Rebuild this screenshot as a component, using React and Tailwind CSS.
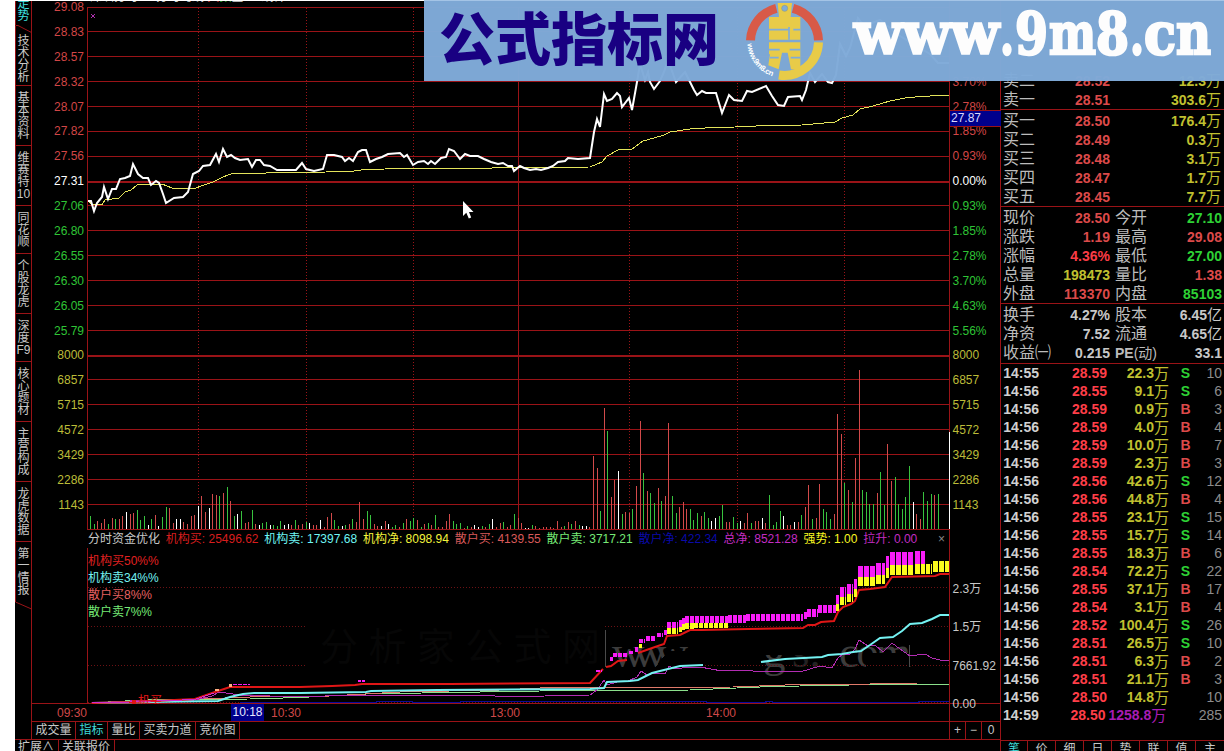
import React from 'react';

const GRID = '#9a1317';

const sideTabs = [
    { label: '技术分析', size: 'h-[60px]' },
    { label: '基本资料', size: 'h-[60px]' },
    { label: '维赛特10', size: 'h-[60px]' },
    { label: '同花顺', size: 'h-[48px]' },
    { label: '个股龙虎', size: 'h-[60px]' },
    { label: '深度F9', size: 'h-[48px]' },
    { label: '核心题材', size: 'h-[60px]' },
    { label: '主营构成', size: 'h-[60px]' },
    { label: '龙虎数据', size: 'h-[60px]' },
    { label: '第一情报', size: 'h-[60px]' }
];

// the first three rows of the percent scale stay empty under the banner
const axis = [
    ['29.08', ''], ['28.83', ''], ['28.57', ''], ['28.32', '3.70%'],
    ['28.07', '2.78%'], ['27.82', '1.85%'], ['27.56', '0.93%'], ['27.31', '0.00%'],
    ['27.06', '0.93%'], ['26.80', '1.85%'], ['26.55', '2.78%'], ['26.30', '3.70%'],
    ['26.05', '4.63%'], ['25.79', '5.56%'], ['8000', '8000'], ['6857', '6857'],
    ['5715', '5715'], ['4572', '4572'], ['3429', '3429'], ['2286', '2286'], ['1143', '1143']
];

const axisColor = (i) => {
    if (i < 7) return 'text-[#d24646]';
    if (i === 7) return 'text-white';
    if (i < 14) return 'text-[#2fc436]';
    return 'text-[#bcbc38]';
};

const gridRows = [7.5, 31.5, 56.5, 81.5, 106.5, 131.5, 156.5, 205.5, 230.5, 255.5, 280.5, 305.5, 330.5, 379.5, 404.5, 429.5, 454.5, 479.5, 504.5, 529.5];
const gridCols = [198.5, 306.5, 413.5, 629.5, 737.5, 844.5];

const priceLine = '88,201 91,201 94,211 97,203 102,197 104,187 108,199 112,189 116,189 120,179 125,178 130,176 133,164 138,174 143,178 148,178 151,185 156,181 159,183 163,194 166,203 174,198 183,197 188,192 193,174 199,171 203,166 210,165 216,154 219,162 223,149 227,157 231,155 235,158 240,160 248,159 252,167 256,160 260,160 264,165 270,166 277,170 296,170 302,163 306,169 314,171 323,169 327,155 334,155 342,157 345,161 349,158 353,161 358,152 362,150 366,150 370,162 376,159 382,157 388,154 400,153 404,157 407,155 413,165 418,162 424,161 428,164 431,161 435,164 441,158 446,157 449,149 454,151 460,159 465,154 470,156 478,156 484,159 491,162 498,164 503,163 508,166 512,166 514,171 520,166 524,168 530,170 536,169 541,170 548,168 553,166 558,162 565,161 568,158 578,159 590,158 594,132 597,119 600,127 604,94 607,101 612,99 617,93 620,96 622,107 629,98 632,110 637,82 640,64 645,80 648,72 650,82 654,89 660,81 664,72 668,60 676,82 685,72 690,82 694,90 697,95 702,91 706,93 716,93 722,113 729,95 734,100 742,101 747,91 752,92 766,86 772,96 778,105 784,106 788,97 800,96 802,100 806,90 810,73 815,82 822,74 828,82 832,83 836,75 840,44 846,56 850,48 858,18 864,26 880,20 900,36 930,54 938,63 949,63';
const averageLine = '88,201 92,204 102,205 105,200 119,198 125,192 131,190 137,185 162,184 172,188 193,189 204,185 213,182 223,177 232,173.5 300,172.5 326,172 354,171 365,169.5 405,168.5 465,168.5 520,167.5 590,167 602,162 607,156 618,150 632,149 643,141 654,138 664,135 670,132 690,129 713,127.5 735,127 767,125.5 802,125 835,122 842,118 853,115 860,109 873,106 890,101 908,97.5 930,96 949,95';

// offset, colour and height of each minute bar, in thirds of a pixel
const morning = '31g40 43g15 52r24 64r18 73r31 85g16 97r34 106g30 118r30 127r40 139w52 151r46 160r48 172g57 181g28 193g40 205w13 214g30 226r43 235w10 247g37 259g67 268r64 280r18 289w31 301w31 310r22 322r16 334r40 343r43 355w70 364r100 376r52 388w64 397r106 409r102 418g100 430r109 442g127 451r85 463g40 472w46 484g54 496r19 505r22 517g58 526r16 538w13 547g18 559g22 571w13 580g12 592g10 601g25 613w13 625w16 634r13 646g28 655r12 667r15 679g22 688w19 700r12 709r13 721w27 733r7 742r36 754r49 763g27 775g10 787w10 796g12 808r16 817g30 829r22 838r80 850r30 862g54 871g43 883r16 892r10 904w10 916r25 925w16 937g6 946g12 958r7 970g18 979r30 991g25 1000g34 1012r28 1025g7 1033r15 1045g19 1054r13 1066g42 1075r7 1087r7 1099r25 1108r46 1120g25 1129g16 1141g19 1153r4 1162g10 1174r7 1183w13 1195w7 1207g10 1216r7 1228g16 1237w31 1249r7 1261r18 1270g22 1282r7 1291r13 1303g46 1315r34 1324r19 1336w4 1345w4 1357g13 1366r10 1378r4 1390r7 1399r7 1411r7 1420r4 1432r25';
const afternoon = '4r6 13g9 25r21 34g15 46r24 58g12 67w9 79w9 88r6 100r219 112r183 121g54 133r363 142g294 154r96 163r147 175w174 187g45 196r51 208r48 217g60 229r129 241r324 250g168 262r114 271g108 283g78 295r123 304g84 316r99 325r318 337g99 349g48 358r66 370r81 379r60 391g60 400g27 412g48 424r39 433g51 445g33 454w24 466w33 478g39 487g72 499r21 508r21 520g36 532g18 541w24 553r18 562r48 574g18 586r24 595r24 607w33 616r18 628g102 640g12 649g21 661g54 670w39 682r12 691r12 703w21 715r21 724g42 736r66 745r132 757g30 769r33 778r135 790g60 799g51 811g30 823r45 832r345 844r285 853g138 865r117 877g81 886r213 898r477 907g117 919g111 928g75 940g75 952r108 961g171 973g72 982r255 994r144 1006g156 1015g75 1027g60 1036g96 1048g189 1060w81 1069r45 1081r30 1090g111 1102g84 1114g105 1123r102 1135g105';

const barColors = { r: '#d24a4a', g: '#38c23e', w: '#ffffff' };

const parseBars = (text, left) =>
    text.split(' ').map((item) => {
        const [, x, color, h] = item.match(/(\d+)([rgw])(\d+)/);
        return { x: Math.floor(left + x / 3), h: Math.round(h / 3), fill: barColors[color] };
    });

const volumeBars = [...parseBars(morning, 80), ...parseBars(afternoon, 560)];

// x1, x2, top, bottom
const magentaBlocks = [
    [358, 361, 680, 682], [362, 365, 680, 682], [233, 250, 683.5, 684.5], [596, 602, 669.5, 671.5],
    [610, 613, 657, 661], [613, 627, 653, 657], [629, 633, 651, 654], [635, 638, 647, 652], [639, 645, 639, 643],
    [646, 656, 636, 641], [657, 663, 633, 637], [664, 667, 630, 635], [667, 678, 622, 628], [679, 682, 620, 627],
    [682, 685, 618, 624], [685, 728, 616, 623], [728, 746, 615, 623], [746, 803, 614, 621], [804, 807, 612, 619],
    [807, 818, 609, 617], [818, 836, 605, 613], [836, 839, 595, 604], [840, 846, 587, 597], [847, 853, 584, 594],
    [854, 857, 579, 589], [858, 875, 566, 577], [876, 885, 563, 575], [886, 889, 556, 568], [890, 914, 552, 565],
    [915, 925, 551, 564]
];
const yellowBlocks = [
    [639, 642, 644, 648], [667, 678, 628, 634], [679, 682, 627, 632], [682, 685, 624, 630], [685, 694, 623, 629],
    [694, 728, 623, 628], [836, 839, 604, 611], [840, 846, 597, 605], [847, 853, 594, 602], [854, 857, 589, 597],
    [858, 875, 577, 586], [876, 885, 575, 584], [886, 889, 568, 578], [890, 914, 565, 575], [915, 925, 564, 574],
    [926, 932, 564, 574], [933, 949, 561, 572]
];

const legend = [
    ['机构买: 25496.62', 'text-[#d81e1e]'],
    ['机构卖: 17397.68', 'text-[#6ff5f5]'],
    ['机构净: 8098.94', 'text-[#f4f43c]'],
    ['散户买: 4139.55', 'text-[#d85a5a]'],
    ['散户卖: 3717.21', 'text-[#76ea76]'],
    ['散户净: 422.34', 'text-[#0a0aa8]'],
    ['总净: 8521.28', 'text-[#c32cc3]'],
    ['强势: 1.00', 'text-[#f8f820]'],
    ['拉升: 0.00', 'text-[#c32cc3]']
];

const asks = [
    ['卖二', '28.52', '12.3万'], ['卖一', '28.51', '303.6万']
];
const bids = [
    ['买一', '28.50', '176.4万'], ['买二', '28.49', '0.3万'], ['买三', '28.48', '3.1万'],
    ['买四', '28.47', '1.7万'], ['买五', '28.45', '7.7万']
];

const RED = 'text-[#dc4a4a]';
const GREEN = 'text-[#2ed135]';
const OLIVE = 'text-[#c0c030]';
const GRAY = 'text-[#c8c8c8]';

const quote = [
    ['现价', '28.50', RED, '今开', '27.10', GREEN],
    ['涨跌', '1.19', RED, '最高', '29.08', RED],
    ['涨幅', '4.36%', 'text-[#fa3c46]', '最低', '27.00', GREEN],
    ['总量', '198473', OLIVE, '量比', '1.38', RED],
    ['外盘', '113370', RED, '内盘', '85103', GREEN]
];
const finance = [
    ['换手', '4.27%', GRAY, '股本', '6.45亿', GRAY],
    ['净资', '7.52', GRAY, '流通', '4.65亿', GRAY],
    ['收益㈠', '0.215', GRAY, 'PE(动)', '33.1', GRAY]
];

const ticks = [
    ['14:55', '28.59', '22.3万', 'S', 10], ['14:56', '28.55', '9.1万', 'S', 6], ['14:56', '28.59', '0.9万', 'B', 3],
    ['14:56', '28.59', '4.0万', 'B', 4], ['14:56', '28.59', '10.0万', 'B', 7], ['14:56', '28.59', '2.3万', 'B', 3],
    ['14:56', '28.56', '42.6万', 'S', 12], ['14:56', '28.56', '44.8万', 'B', 4], ['14:56', '28.55', '23.1万', 'S', 15],
    ['14:56', '28.55', '15.7万', 'S', 14], ['14:56', '28.55', '18.3万', 'B', 6], ['14:56', '28.54', '72.2万', 'S', 22],
    ['14:56', '28.55', '37.1万', 'B', 17], ['14:56', '28.54', '3.1万', 'B', 4], ['14:56', '28.52', '100.4万', 'S', 26],
    ['14:56', '28.51', '26.5万', 'S', 10], ['14:56', '28.51', '6.3万', 'B', 2], ['14:56', '28.51', '21.1万', 'B', 3],
    ['14:56', '28.50', '14.8万', '', 10], ['14:59', '28.50', '1258.8万', '', 285]
];

// bold digits with a lighter, wider unit character behind them
const Num = ({ children, className }) => {
    const [, digits, unit] = String(children).match(/^([\d.%:]+)(.*)$/);
    return (
        <span className={`text-right whitespace-nowrap ${className}`}>
            <span className="font-bold text-[14px]">{digits}</span>
            {unit && <span className="text-[15px]">{unit}</span>}
        </span>
    );
};

const SideBar = () => (
    <div className="w-[17px] shrink-0 flex flex-col text-xs leading-[12px] text-[#c8c8c8]">
        <div className="h-[25px] border-x border-[#9a1317] flex flex-col items-center justify-end pb-[3px] text-[#3fe0e0] shrink-0">
            <span>走</span>
            <span>势</span>
        </div>
        <svg width="17" height="8" className="shrink-0 block">
            <path d="M0.5 8V0.5H3L16.5 7.5V8M16.5 0V8" fill="none" stroke={GRID} />
        </svg>
        {sideTabs.map((tab, i) => (
            <div
                key={tab.label}
                className={`shrink-0 border-x border-[#9a1317] flex flex-col items-center justify-center ${tab.size} ${i === 0 ? 'h-[53px]! border-b' : i < 9 ? 'border-b' : ''}`}
            >
                {tab.label.split(/(\d+|F9)/).filter(Boolean).map((part) =>
                    /\d/.test(part) ? <span key={part}>{part}</span> : part.split('').map((c) => <span key={c}>{c}</span>)
                )}
            </div>
        ))}
        <svg width="17" height="8" className="shrink-0 block">
            <path d="M0.5 0L16.5 7M16.5 0V8" fill="none" stroke={GRID} />
        </svg>
        <div className="flex-1 border-r border-[#9a1317]"></div>
    </div>
);

const PriceChart = () => (
    <svg width="863" height="530" viewBox="87 0 863 530" className="block" shapeRendering="crispEdges">
        <g stroke={GRID}>
            {gridRows.map((y) => <line key={y} x1="87" x2="950" y1={y} y2={y} />)}
            <line x1="87" x2="950" y1="182" y2="182" strokeWidth="2" />
            <line x1="87" x2="950" y1="356" y2="356" strokeWidth="2" />
            {gridCols.map((x) => <line key={x} x1={x} x2={x} y1="8" y2="529" strokeDasharray="1 2" />)}
            <line x1="518.5" x2="518.5" y1="8" y2="529" />
            <line x1="87.5" x2="87.5" y1="7" y2="530" />
            <line x1="949.5" x2="949.5" y1="0" y2="530" />
        </g>
        {volumeBars.map((b) => <rect key={b.x} x={b.x} y={529 - b.h} width="1" height={b.h} fill={b.fill} />)}
        <rect x="949" y="432" width="1" height="97" fill="#fff" />
        <path d="M91 14l4 4M95 14l-4 4" stroke="#b030b0" />
        <polyline points={averageLine} fill="none" stroke="#e4e45a" />
        <polyline points={priceLine} fill="none" stroke="#fff" strokeWidth="2" shapeRendering="auto" />
    </svg>
);

const Blocks = ({ items, color }) =>
    items.map(([x1, x2, top, bottom]) => (
        <line
            key={`${x1}-${top}`}
            x1={x1}
            x2={x2}
            y1={(top + bottom) / 2}
            y2={(top + bottom) / 2}
            stroke={color}
            strokeWidth={bottom - top}
            strokeDasharray={x2 - x1 > 4 ? (top < 600 && x2 - x1 > 8 ? '5 1' : '4 1') : undefined}
        />
    ));

const FundChart = () => (
    <svg width="863" height="156" viewBox="87 548 863 156" className="block" shapeRendering="crispEdges">
        <g fontFamily="'Noto Sans CJK SC', sans-serif" fill="#060606" fontSize="38">
            <text x="320" y="660" textLength="280">分析家公式网</text>
        </g>
        <g fontFamily="'Liberation Serif', serif" fill="#3c3c3c" fontSize="45">
            <text x="612" y="667" textLength="76">www</text>
            <text x="763" y="667">g</text>
            <text x="792" y="667" fill="#222">s.</text>
            <text x="839" y="667" textLength="72">com</text>
        </g>
        <rect x="763" y="640" width="50" height="15" fill="#000" />
        <path d="M655 668L668 651H690V668ZM866 653H909V668H866Z" fill="#000" />
        <g stroke="#6b1114" strokeDasharray="1 2">
            <path d="M88 587.5H949M88 626.5H307M605 626.5H949M88 665.5H307M690 665.5H949M88 702.5H949" />
        </g>
        <path d="M605.5 630V667M909.5 645V667" stroke="#4a4a4a" />
        <path d="M87.5 548V704M949.5 548V704" stroke={GRID} />
        <g fill="none">
            <path d="M240 702.5H376V701.5H412V702.5H460V701.5H706V702.5H765V701.5H772V702.5H918V701.5H949" stroke="#0a0a9c" />
            <polyline points="92,703 125,701 160,699.5 250,699 300,697.5 366,694 450,692.5 540,691 690,690 760,687 800,686 850,685 949,684.5" stroke="#8be08b" />
            <polyline points="92,703 200,699 250,697 330,696 400,692 500,690 540,688 733,687 785,685 870,684 918,683 949,683" stroke="#e07a6a" />
            <polyline points="92,703 130,701 195,700 212,696 219,692 226,693 240,695 300,697 350,695 490,695 500,697 545,696 590,695 597,690 604,680 607,685 617,682 628,681 637,677 641,671 647,675 655,673 665,674 669,666 675,669 690,667 700,667 722,671 745,670 760,672 770,671 800,672 820,666 832,668 838,658 842,655 850,654 855,649 859,640 868,646 875,645 883,652 892,643 900,649 910,656 925,654 932,658 940,660 949,660" stroke="#b22cb2" />
            <g strokeWidth="2" shapeRendering="auto">
                <polyline points="92,703 180,701.5 218,701 230,697 243,694 254,693 300,693 366,692 371,691 437,690 590,689 604,688 607,682 630,681 638,680 652,673 668,669 680,666 703,665" stroke="#74f2f2" />
                <polyline points="761,662 785,659 822,657 828,655 842,654 853,652 861,651 870,645 880,638 893,637 902,631 910,624 922,623 932,619 940,615 949,615" stroke="#74f2f2" />
                <polyline points="92,703 133,702 195,699 215,692 230,687 300,687 332,686 355,685 362,684 450,684 590,683 603,669" stroke="#e01616" />
                <polyline points="606,667 611,666 618,661 627,660" stroke="#e01616" />
                <polyline points="638,653 655,647 664,644 667,636 680,635 690,630 702,630 748,629 803,628 808,625 815,625 821,622 834,621 838,612 843,607 851,604 855,601 859,590 870,589 885,587 892,577 935,576 940,574 949,574" stroke="#e01616" />
            </g>
        </g>
        <polyline points="92,703 130,702 195,699.5 214,693" fill="none" stroke="#d02cd0" />
        <path d="M215 689h4v2h-4zM229 684h3v3h-3z" fill="#ffb080" />
        <path d="M132 700h4v4h-4z" fill="#e01616" />
        <text x="138" y="705" fontSize="12" fill="#e01616" fontFamily="'Noto Sans CJK SC', sans-serif">机买</text>
        <Blocks items={magentaBlocks} color="#f81cf8" />
        <Blocks items={yellowBlocks} color="#fbfb1e" />
    </svg>
);

const ChartPanel = () => (
    <div className="flex-1 flex flex-col">
        <div className="flex h-[704px] border-b border-[#9a1317]">
            <div className="w-[55px] pr-[3px] -mt-[5px] text-right leading-[24.9px]">
                {axis.map(([left], i) => (
                    <div key={i} className={`h-[24.9px] ${axisColor(i)}`}>{left}</div>
                ))}
            </div>
            <div className="w-[863px] relative">
                <PriceChart />
                <div className="h-[18px] pl-px pr-[4px] flex items-center gap-[5.8px] whitespace-nowrap border-r border-[#9a1317] text-[#c8c8c8]">
                    <span>分时资金优化</span>
                    {legend.map(([text, color]) => <span key={text} className={color}>{text}</span>)}
                    <span className="ml-auto text-[#888]">×</span>
                </div>
                <FundChart />
                <div className="absolute left-[1px] top-[553px] leading-[17px]">
                    <div className="text-[#e02020]">机构买50%%</div>
                    <div className="text-[#74f2f2]">机构卖34%%</div>
                    <div className="text-[#e66060]">散户买8%%</div>
                    <div className="text-[#76ea76]">散户卖7%%</div>
                </div>
                <div className="absolute left-[3px] -top-[11px] flex gap-[18px] leading-[17px] text-[#d0d0d0]">
                    <span>深圳分时</span>
                    <span>分时均线 <span className="text-[#d84040]">大</span><span className="text-[#35b53a]">数</span>全</span>
                    <span>线钟</span>
                </div>
            </div>
            <div className="pl-[2.5px] -mt-[5px] relative">
                <div className="leading-[24.9px]">
                    {axis.map(([, right], i) => (
                        <div key={i} className={`h-[24.9px] ${axisColor(i)}`}>{right}</div>
                    ))}
                </div>
                <div className="pt-[52px] leading-[38.5px] text-[#c8c8c8]">
                    <div>2.3万</div>
                    <div>1.5万</div>
                    <div>7661.92</div>
                    <div>0.00</div>
                </div>
                <div className="absolute left-0 top-[115px] w-[51px] h-[17px] bg-[#00008c] border-y border-[#9a1317] leading-[14px] pl-px text-[#d8d8ff]">27.87</div>
            </div>
        </div>
        <div className="h-[18px] border-b border-[#9a1317] flex items-center text-[#d04848]">
            <span className="ml-[25px] w-[30px]">09:30</span>
            <span className="ml-[144px] w-[33px] h-[17px] bg-[#00008c] text-center text-[#e8e8ff]">10:18</span>
            <span className="ml-[7px] w-[30px]">10:30</span>
            <span className="ml-[189px] w-[30px]">13:00</span>
            <span className="ml-[186px] w-[30px]">14:00</span>
            <span className="ml-[213px] h-full border-l border-[#9a1317]"></span>
        </div>
        <div className="flex h-[17px] leading-[17px] text-center text-[#c8c8c8]">
            <div className="w-[44px] border-r border-[#9a1317]">成交量</div>
            <div className="w-[32px] border-r border-[#9a1317] text-[#3fd8d8]">指标</div>
            <div className="w-[32px] border-r border-[#9a1317]">量比</div>
            <div className="w-[56px] border-r border-[#9a1317]">买卖力道</div>
            <div className="w-[44px] border-r border-[#9a1317]">竞价图</div>
            <div className="ml-auto w-[17px] border-x border-[#9a1317]">+</div>
            <div className="w-[16px] border-r border-[#9a1317]">−</div>
            <div className="w-[18px]">0</div>
        </div>
    </div>
);

const OrderRows = ({ rows }) =>
    rows.map(([label, price, amount]) => (
        <div key={label} className="h-[19px] flex items-center">
            <span className="w-[50px] text-[16px] text-[#bcbcbc]">{label}</span>
            <Num className={`w-[57px] ${RED}`}>{price}</Num>
            <Num className={`flex-1 ${OLIVE}`}>{amount}</Num>
        </div>
    ));

const InfoRows = ({ rows }) =>
    rows.map(([label, value, color, label2, value2, color2]) => (
        <div key={label} className="h-[19px] flex items-center">
            <span className="w-[50px] text-[16px] text-[#bcbcbc] whitespace-nowrap">{label}</span>
            <Num className={`w-[57px] ${color}`}>{value}</Num>
            <span className="ml-[5px] w-[46px] text-[16px] text-[#bcbcbc] whitespace-nowrap">
                {label2 === 'PE(动)' ? <span className="text-[14px]"><b>PE</b>(动)</span> : label2}
            </span>
            <Num className={`flex-1 ${color2}`}>{value2}</Num>
        </div>
    ));

const QuotePanel = () => (
    <div className="w-[224px] shrink-0 border-l border-[#9a1317] flex flex-col text-[15px] leading-[19px]">
        <div className="pt-[71px] pl-[2px] pr-[3px] border-b border-[#9a1317]"><OrderRows rows={asks} /></div>
        <div className="pt-px pl-[2px] pr-[3px] border-b border-[#9a1317]"><OrderRows rows={bids} /></div>
        <div className="pt-px pl-[2px] pr-[2px] border-b border-[#9a1317]"><InfoRows rows={quote} /></div>
        <div className="pt-px pb-[1px] pl-[2px] pr-[2px] border-b border-[#9a1317]"><InfoRows rows={finance} /></div>
        <div className="pl-[2px] pr-[2px]">
            {ticks.map(([time, price, amount, side, count], i) => (
                <div key={i} className="h-[18px] flex items-center">
                    <Num className="w-[36px] text-[#d0d0d0]">{time}</Num>
                    <Num className="w-[68px] text-[#ff3e48]">{price}</Num>
                    <Num className={`w-[62px] ${i === 19 ? 'text-[#a81cb4]' : OLIVE} flex justify-end`}>{amount}</Num>
                    <span className={`w-[33px] text-center text-[14px] font-bold ${side === 'S' ? GREEN : RED}`}>{side}</span>
                    <span className="flex-1 text-right text-[14px] text-[#8c8c8c]">{count}</span>
                </div>
            ))}
        </div>
        <div className="mt-auto h-[11px] border-t border-[#9a1317] flex text-xs text-center text-[#c8c8c8] leading-[16px] overflow-hidden">
            {'笔价细日势联值主'.split('').map((c, i) => (
                <div key={c} className={`${i === 0 ? 'w-[27px] text-[#3fd8d8]' : 'w-[28px]'} shrink-0 ${i < 7 ? 'border-r border-[#9a1317]' : ''}`}>{c}</div>
            ))}
        </div>
    </div>
);

const Logo = () => (
    <svg width="80" height="81" viewBox="975 0 240 243">
        <g fill="none" strokeWidth="27">
            <path d="M991.5 118A103 103 0 0 1 1069 22" stroke="#d85a48" />
            <path d="M1119 22A103 103 0 0 1 1195.500 118" stroke="#d85a48" />
            <path d="M1195.500 124A103 103 0 0 1 1077 222" stroke="#e8cb48" />
        </g>
        <path d="M1073 6H1116L1112 48H1141V116H1047V48H1077Z" fill="#e8cb48" />
        <path d="M1047 124H1141V205L1113 205L1103 155H1086L1076 205L1045 193L1050 160H1047Z" fill="#e8cb48" />
        <circle cx="1094" cy="22" r="9" fill="#7facd9" stroke="#8f9d84" strokeWidth="2" />
        <path d="M1047 86H1079M1107 78V116M1079 86H1107M1120 86H1141M1047 146H1079M1109 146H1141M1050 170H1076M1112 170H1141" stroke="#7facd9" strokeWidth="5" />
        <defs>
            <path id="ring" d="M982 128A112 112 0 0 0 1068 229" />
        </defs>
        <text fontSize="23" fontWeight="bold" fill="#fff" fontFamily="'Liberation Sans', sans-serif">
            <textPath href="#ring" textLength="130">www.9m8.cn</textPath>
        </text>
    </svg>
);

// x and width of each piece of the site name
const domain = [
    ['www', 29, 145], ['.', 175, 14], ['9', 190, 33], ['m', 224, 47], ['8', 271, 33],
    ['.', 305, 14], ['c', 319, 32], ['n', 351, 35]
];

const Banner = () => (
    <div className="absolute left-[424px] top-0 w-[800px] h-[81px] bg-[#7faad8]/98 border-t border-[#a4c4e6] flex items-center">
        <svg width="300" height="80">
            <text x="15" y="59" fontSize="57" fontWeight="900" fill="#190082" textLength="280" lengthAdjust="spacingAndGlyphs" fontFamily="'Noto Sans CJK SC', sans-serif">公式指标网</text>
        </svg>
        <div className="w-[21px]"></div>
        <Logo />
        <svg width="399" height="80">
            <g fontSize="58" fontWeight="bold" fill="#fdfdfd" stroke="#fdfdfd" strokeWidth="2.5" fontFamily="'DejaVu Serif', serif">
                {domain.map(([text, x, width]) => (
                    <text key={x} x={x} y="53" textLength={width} lengthAdjust="spacingAndGlyphs">{text}</text>
                ))}
            </g>
        </svg>
    </div>
);

const App = () => (
    <div className="relative w-[1224px] h-[751px] overflow-hidden bg-white pl-[15px] flex font-['Liberation_Sans','Noto_Sans_CJK_SC',sans-serif]">
        <div className="flex flex-1 bg-black">
            <div className="flex-1 flex flex-col text-xs">
                <div className="flex h-[740px] border-b border-[#9a1317]">
                    <SideBar />
                    <ChartPanel />
                </div>
                <div className="flex h-[11px] leading-[15px] text-[#c8c8c8] overflow-hidden">
                    <div className="w-[44px] pl-[3px] border-r border-[#9a1317]">扩展∧</div>
                    <div className="w-[56px] pl-[3px] border-r border-[#9a1317] whitespace-nowrap">关联报价</div>
                </div>
            </div>
            <QuotePanel />
        </div>
        <div className="absolute left-0 top-0 w-full h-px bg-white"></div>
        <Banner />
        <svg width="12" height="19" viewBox="0 0 12 19" className="absolute left-[462px] top-[200px]">
            <path d="M1 1V16L4.300 12.800L6.800 18.500L9.200 17.500L7 12H11.500Z" fill="#fff" />
        </svg>
    </div>
);

export default App;
